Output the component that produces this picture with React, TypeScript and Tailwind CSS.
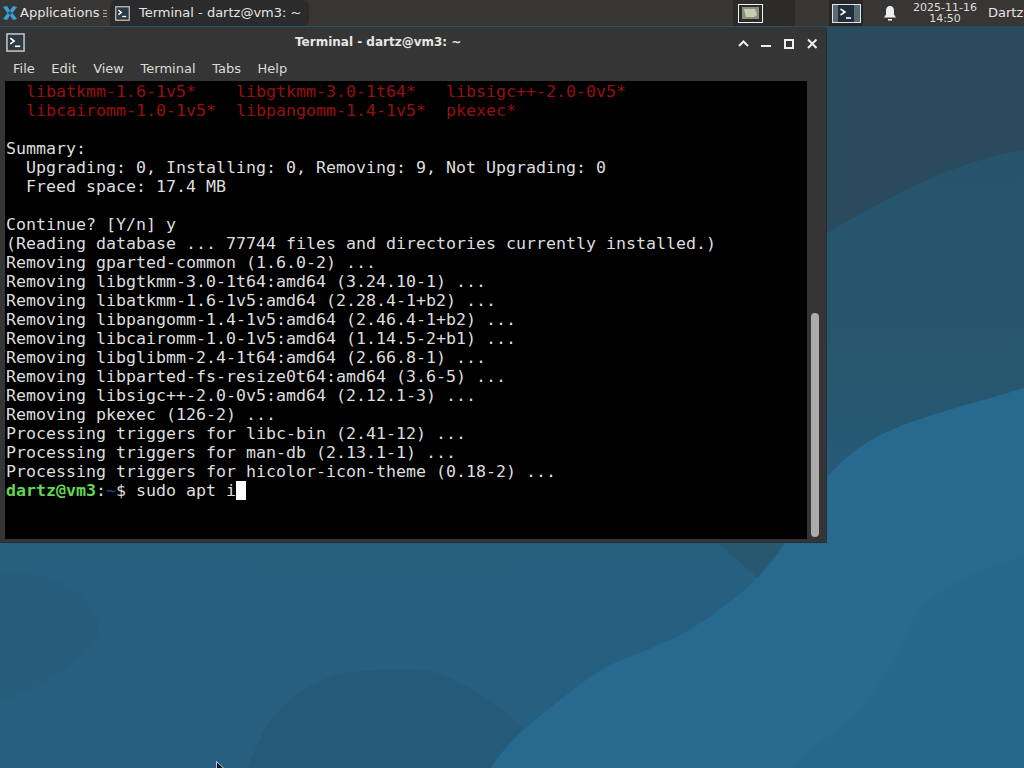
import React from "react";

const sans = { fontFamily: '"DejaVu Sans", sans-serif' };

function Wallpaper() {
  return (
    <svg className="absolute inset-0 w-[1024px] h-[768px]" viewBox="0 0 1024 768">
      <defs>
        <linearGradient id="mid" x1="0" y1="0" x2="0" y2="1">
          <stop offset="0" stopColor="#27536b" />
          <stop offset="0.5" stopColor="#27566f" />
          <stop offset="0.75" stopColor="#265f7f" />
          <stop offset="1" stopColor="#265f80" />
        </linearGradient>
      </defs>
      <rect width="1024" height="768" fill="url(#mid)" />
      <path d="M0 573 C30 570 60 578 80 595 C105 620 105 640 75 662 C50 680 20 695 0 703 Z" fill="#265d7d" />
      <path d="M248 768 C260 735 270 718 285 705 C310 680 340 672 366 671 C400 668 430 668 448 677 C475 690 495 700 523 730 L490 768 Z" fill="#265a79" />
      <path d="M790 0 H1024 V150 C960 160 900 190 827 233 L790 256 Z" fill="#2a4a5e" />
      <path d="M1024 388 C960 408 900 420 860 447 C845 458 835 468 826 478 C805 500 795 525 784 545 C772 565 745 592 719 610 C695 628 675 638 654 647 C635 655 618 660 601 670 C585 680 570 692 556 703 C545 712 535 720 523 730 C510 742 500 755 490 768 H1024 Z" fill="#28698f" />
      <path d="M715 540 H786 L758 578 Z" fill="#27586f" />
      <path d="M790 768 C820 740 850 725 869 700 C890 670 905 640 915 617 C930 590 980 570 1024 555 V768 Z" fill="#27668d" />
    </svg>
  );
}

function TerminalGlyph({ className }: { className: string }) {
  return (
    <svg className={className} viewBox="0 0 20 20">
      <rect x="1" y="1" width="18" height="18" fill="#2c3a44" stroke="#c4c8cb" strokeWidth="1.6" />
      <path d="M4.5 5.5 L8.5 8.5 L4.5 11.5" fill="none" stroke="#fff" strokeWidth="1.7" />
      <path d="M9.5 14 H15" stroke="#fff" strokeWidth="1.7" />
    </svg>
  );
}

const lines = [
  "Summary:",
  "  Upgrading: 0, Installing: 0, Removing: 9, Not Upgrading: 0",
  "  Freed space: 17.4 MB",
  "",
  "Continue? [Y/n] y",
  "(Reading database ... 77744 files and directories currently installed.)",
  "Removing gparted-common (1.6.0-2) ...",
  "Removing libgtkmm-3.0-1t64:amd64 (3.24.10-1) ...",
  "Removing libatkmm-1.6-1v5:amd64 (2.28.4-1+b2) ...",
  "Removing libpangomm-1.4-1v5:amd64 (2.46.4-1+b2) ...",
  "Removing libcairomm-1.0-1v5:amd64 (1.14.5-2+b1) ...",
  "Removing libglibmm-2.4-1t64:amd64 (2.66.8-1) ...",
  "Removing libparted-fs-resize0t64:amd64 (3.6-5) ...",
  "Removing libsigc++-2.0-0v5:amd64 (2.12.1-3) ...",
  "Removing pkexec (126-2) ...",
  "Processing triggers for libc-bin (2.41-12) ...",
  "Processing triggers for man-db (2.13.1-1) ...",
  "Processing triggers for hicolor-icon-theme (0.18-2) ...",
];

export default function App() {
  return (
    <div className="relative w-[1024px] h-[768px] overflow-hidden bg-[#265f80]" style={sans}>
      <Wallpaper />

      {/* Top panel */}
      <div className="relative flex items-center h-[26px] bg-[#383635] text-[#e4e4e4] text-[13px]">
        <svg className="ml-[2px] w-[16px] h-[16px] shrink-0" viewBox="0 0 16 16">
          <path d="M1 2 L5 1 L8 5.5 L11 1 L15 2 L10.5 8 L15 14 L11 15 L8 10.5 L5 15 L1 14 L5.5 8 Z" fill="#3aa0d4" />
          <path d="M5.5 8 L8 5.5 L10.5 8 L8 10.5 Z" fill="#1b5f86" />
        </svg>
        <span className="ml-[2px] w-[80px] shrink-0">Applications</span>
        <div className="ml-[3px] w-[4px] flex flex-col gap-[2px] shrink-0">
          <div className="h-px bg-[#a8a8a8]" />
          <div className="h-px bg-[#a8a8a8]" />
          <div className="h-px bg-[#a8a8a8]" />
        </div>
        <div className="ml-[3px] flex items-center h-[26px] w-[199px] bg-[#2b2b2b] rounded-t-[6px] rounded-br-[6px] shrink-0">
          <TerminalGlyph className="ml-[5px] w-[15px] h-[15px]" />
          <span className="ml-[9px] whitespace-nowrap">Terminal - dartz@vm3: ~</span>
        </div>
        <div className="ml-[424px] w-[62px] h-[26px] bg-[#2c2b2a] flex items-center shrink-0">
          <div className="ml-[5px] w-[25px] h-[19px] border border-[#f0f0f0] flex items-center justify-center">
            <svg className="w-[17px] h-[12px]" viewBox="0 0 17 12">
              <rect width="17" height="12" fill="#8b9278" />
              <path d="M2 2 H13 L15 8 L12 10 H4 Z" fill="#c6ceb0" />
            </svg>
          </div>
        </div>
        <div className="ml-[34px] w-[34px] h-[26px] bg-[#262626] flex items-center justify-center shrink-0">
          <div className="w-[29px] h-[19px] border border-[#dfe5e8] bg-[#5a6a72] flex items-center justify-center">
            <svg className="w-[16px] h-[17px] bg-[#1e2e3a]" viewBox="0 0 16 17">
              <path d="M2.5 4 L7 7 L2.5 10" fill="none" stroke="#fff" strokeWidth="1.6" />
              <path d="M8 13 H13" stroke="#fff" strokeWidth="1.6" />
            </svg>
          </div>
        </div>
        <svg className="ml-[20px] w-[14px] h-[16px] shrink-0" viewBox="0 0 14 16">
          <path d="M7 1 C10 1 11 3.5 11 6 V9.5 L13 12.5 H1 L3 9.5 V6 C3 3.5 4 1 7 1 Z" fill="#efefef" />
          <rect x="5" y="14" width="4" height="1.6" fill="#efefef" />
        </svg>
        <div className="ml-[13px] w-[70px] text-center text-[11px] leading-[11px] text-[#dcdcdc] shrink-0">
          <div>2025-11-16</div>
          <div>14:50</div>
        </div>
        <span className="ml-[8px] whitespace-nowrap">Dartz</span>
      </div>

      {/* Terminal window */}
      <div className="relative mt-[1px] flex flex-col w-[827px] h-[516px] bg-[#353535] border-r border-b border-[#22303a] rounded-tr-[4px]">
        <div className="relative flex items-center h-[30px] shrink-0">
          <TerminalGlyph className="ml-[6px] w-[19px] h-[19px]" />
          <span className="ml-[270px] font-bold text-[#e6e6e6] text-[12px] whitespace-nowrap">Terminal - dartz@vm3: ~</span>
          <svg className="ml-auto mr-[8px] mt-[2px] w-[80px] h-[14px]" viewBox="0 0 80 14" fill="none" stroke="#eeeeee" strokeWidth="2">
            <path d="M1 10 L5.5 5.5 L10 10" />
            <path d="M23 10 H33" />
            <rect x="47" y="4" width="8" height="8" />
            <path d="M70 3.5 L78.5 12 M78.5 3.5 L70 12" />
          </svg>
        </div>
        <div className="flex items-center h-[24px] shrink-0 text-[13px] text-[#dadada] gap-[16.6px] pl-[13px]">
          <span>File</span>
          <span>Edit</span>
          <span>View</span>
          <span>Terminal</span>
          <span>Tabs</span>
          <span>Help</span>
        </div>
        <div className="flex h-[458px] pl-[5px] shrink-0">
          <div
            className="w-[802px] h-[458px] bg-black text-[#dedede] text-[16.61px] leading-[19px] pl-px pt-px overflow-hidden whitespace-pre"
            style={{ fontFamily: '"DejaVu Sans Mono", monospace' }}
          >
            <div className="text-[#990f0f]">{"  libatkmm-1.6-1v5*    libgtkmm-3.0-1t64*   libsigc++-2.0-0v5*"}</div>
            <div className="text-[#990f0f]">{"  libcairomm-1.0-1v5*  libpangomm-1.4-1v5*  pkexec*"}</div>
            <div>{" "}</div>
            {lines.map((l, i) => (
              <div key={i}>{l || " "}</div>
            ))}
            <div className="flex">
              <span className="font-bold text-[#62d84e]">dartz@vm3</span>
              <span>:</span>
              <span className="text-[#1f4e9c]">~</span>
              <span>{"$ sudo apt i"}</span>
              <span className="w-[10px] h-[19px] bg-white" />
            </div>
          </div>
          <div className="flex-1 flex justify-start pl-[4px]">
            <div className="mt-[232px] w-[8px] h-[224px] rounded-full bg-[#ababab]" />
          </div>
        </div>
      </div>

      {/* Mouse pointer */}
      <svg className="absolute left-[216px] top-[761px] w-[9px] h-[12px]" viewBox="0 0 9 12">
        <path d="M0.5 0.5 V10 L3 8 L5 12 L7 11 L5 7.5 L8 7.5 Z" fill="#0c1a26" stroke="#fff" strokeWidth="0.7" />
      </svg>
    </div>
  );
}
